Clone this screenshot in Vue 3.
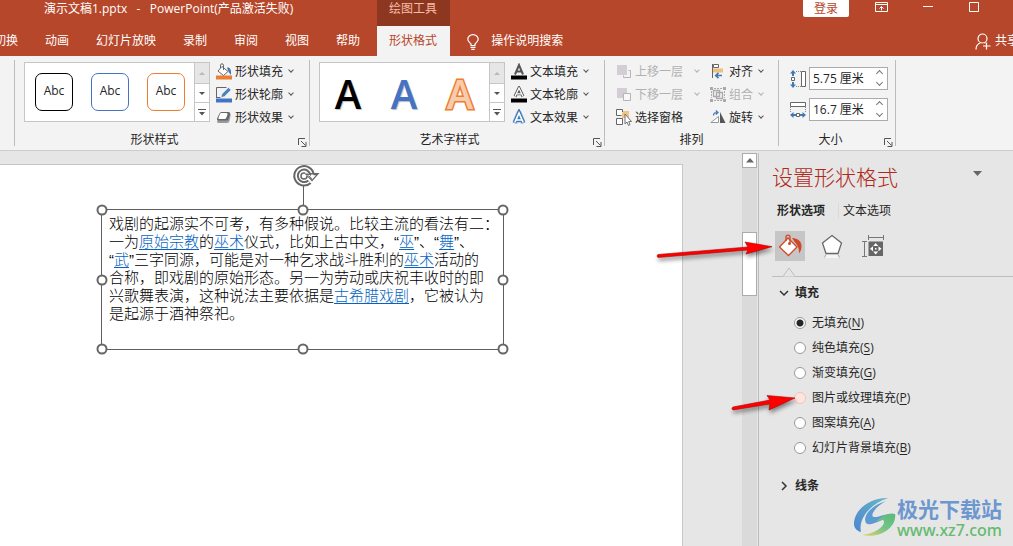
<script setup>
import { ref } from 'vue'

const tabs = ['切换', '动画', '幻灯片放映', '录制', '审阅', '视图', '帮助']
const shapeStyles = ['black', 'blue', 'orange']
const height = ref('5.75 厘米')
const width = ref('16.7 厘米')
const fill = ref('N')
const fills = [
  { key: 'N', label: '无填充' },
  { key: 'S', label: '纯色填充' },
  { key: 'G', label: '渐变填充' },
  { key: 'P', label: '图片或纹理填充', hover: true },
  { key: 'A', label: '图案填充' },
  { key: 'B', label: '幻灯片背景填充' }
]
const handles = ['nw', 'n', 'ne', 'w', 'e', 'sw', 's', 'se']
</script>

<template>
  <div class="app">
    <header class="top">
      <div class="titlebar">
        <div class="doc-title">演示文稿1.pptx&nbsp;&nbsp; -&nbsp;&nbsp; PowerPoint(产品激活失败)</div>
        <div class="context">绘图工具</div>
        <div class="win">
          <button class="login">登录</button>
          <button class="wbtn" aria-label="功能区显示选项">
            <svg width="13" height="11" viewBox="0 0 13 11" fill="none" stroke="#fff"><path d="M.5 .5h12v9h-12zM.5 2.500h12M6.500 8.500V4.500M4.500 6.500l2-2 2 2" /></svg>
          </button>
          <button class="wbtn" aria-label="最小化">
            <svg width="10" height="11" viewBox="0 0 10 11" stroke="#fff"><path d="M0 4.500h10" /></svg>
          </button>
          <button class="wbtn" aria-label="最大化">
            <svg width="10" height="11" viewBox="0 0 10 11" fill="none" stroke="#fff"><path d="M.5 .5h9v9h-9z" /></svg>
          </button>
        </div>
      </div>
      <nav class="tabs">
        <button v-for="t in tabs" :key="t" class="tab">{{ t }}</button>
        <button class="tab active">形状格式</button>
        <button class="tell">
          <svg width="12" height="16" viewBox="0 0 12 16" fill="none" stroke="#fff" stroke-width="1.200"><path d="M4 11.500V10C2.500 8.500 .8 7.500 .8 5.300a5.200 4.700 0 0 1 10.400 0C11.200 7.500 9.500 8.500 8 10v1.500zM3.500 13.400h5M4.300 15.300h3.400" /></svg>
          <span>操作说明搜索</span>
        </button>
        <button class="share">
          <svg width="16" height="17" viewBox="0 0 16 17" fill="none" stroke="#fff" stroke-width="1.200"><circle cx="7.500" cy="5.500" r="4.500" /><path d="M1 16.500c0-3 1.500-5.500 4.500-6.700M9.500 9.800l1 .5M11.500 9.500v7M8 13h7.500" /></svg>
          <span>共享</span>
        </button>
      </nav>
    </header>

    <section class="ribbon">
      <div class="group styles">
        <div class="body">
          <div class="gallery">
            <div class="items">
              <button v-for="s in shapeStyles" :key="s" class="shape" :class="s">Abc</button>
            </div>
            <div class="scroller">
              <button aria-label="上一行" class="off"><svg width="6" height="3" viewBox="0 0 6 3"><path d="M0 3l3-3 3 3z" fill="#b8b8b8" /></svg></button>
              <button aria-label="下一行"><svg width="6" height="3" viewBox="0 0 6 3"><path d="M0 0h6L3 3z" fill="#555" /></svg></button>
              <button aria-label="其他"><svg width="8" height="7" viewBox="0 0 8 7"><path d="M0 0h8v1H0zM1 3h6L4 6.500z" fill="#555" /></svg></button>
            </div>
          </div>
          <div class="cmds">
            <button class="cmd">
              <svg width="16" height="17" viewBox="0 0 16 17"><path d="M0 12.500h16v4H0z" fill="#ed7d31" /><path d="M6 3.500l6 5-4.500 4-5.500-4.500z" fill="#fff" stroke="#666" /><path d="M4.500 5V2.200C4.500 .3 7.500 .3 7.500 2.200V7" fill="none" stroke="#666" /><path d="M11 4.500c3-.5 4.500 2 4 7.500-1-1.500-2-2-2.500-3.500z" fill="#3f74b5" /></svg>
              <span>形状填充</span><i class="caret"></i>
            </button>
            <button class="cmd">
              <svg width="16" height="17" viewBox="0 0 16 17"><path d="M0 12.500h16v4H0z" fill="#4472c4" /><path d="M10.500 1.500h-10v10.500M.5 11.500h4" fill="none" stroke="#666" /><path d="M5 11.500l1-3.500L12.500 1.500 15 4 8.500 10.500z" fill="#4b83bd" stroke="#f3f3f3" stroke-width=".5" /></svg>
              <span>形状轮廓</span><i class="caret"></i>
            </button>
            <button class="cmd">
              <svg width="16" height="17" viewBox="0 0 16 17"><path d="M5 4h8q2 0 1.700 2l-1.200 6q-.5 2-2.500 2H3q-2 0-2-1.500z" fill="#999" /><path d="M5.500 3h7q2 0 1.500 2L12.500 10q-.5 1.500-2 1.500H2.500q-2 0-1.500-2L3.500 4.500q.5-1.500 2-1.500z" fill="#666" /><path d="M5.500 4h5q1.500 0 1 1.500L10.200 9q-.4 1-1.500 1H3Q2 10 2.400 9L4 5q.5-1 1.500-1z" fill="#fff" /></svg>
              <span>形状效果</span><i class="caret"></i>
            </button>
          </div>
        </div>
        <div class="foot"><span>形状样式</span><button class="launch" aria-label="形状样式设置"><svg width="9" height="9" viewBox="0 0 9 9" fill="none" stroke="#555"><path d="M.5 7V.5H7M3 3l4.500 4.500M8 4v4.500H3.500" /></svg></button></div>
      </div>

      <div class="group styles">
        <div class="body">
          <div class="gallery">
            <div class="items letters">
              <button class="letter black">A</button>
              <button class="letter blue">A</button>
              <button class="letter orange">A</button>
            </div>
            <div class="scroller">
              <button aria-label="上一行" class="off"><svg width="6" height="3" viewBox="0 0 6 3"><path d="M0 3l3-3 3 3z" fill="#b8b8b8" /></svg></button>
              <button aria-label="下一行"><svg width="6" height="3" viewBox="0 0 6 3"><path d="M0 0h6L3 3z" fill="#555" /></svg></button>
              <button aria-label="其他"><svg width="8" height="7" viewBox="0 0 8 7"><path d="M0 0h8v1H0zM1 3h6L4 6.500z" fill="#555" /></svg></button>
            </div>
          </div>
          <div class="cmds">
            <button class="cmd">
              <svg width="16" height="17" viewBox="0 0 16 17"><path d="M0 12.500h16v4H0z" fill="#000" /><path d="M4 11.500L8 2l4 9.500M5.500 8.500h5" fill="none" stroke="#555" stroke-width="2" /></svg>
              <span>文本填充</span><i class="caret"></i>
            </button>
            <button class="cmd">
              <svg width="16" height="17" viewBox="0 0 16 17"><path d="M0 12.500h16v4H0z" fill="#000" /><path d="M4 10.500L8 2l4 8.500M5.500 7.800h5" fill="none" stroke="#555" stroke-width="3" /><path d="M4 10.500L8 2l4 8.500M5.500 7.800h5" fill="none" stroke="#fff" stroke-width="1.300" /></svg>
              <span>文本轮廓</span><i class="caret"></i>
            </button>
            <button class="cmd">
              <svg width="16" height="17" viewBox="0 0 16 17"><path d="M4 13.500L8 4l4 9.500M5.500 11h5" fill="none" stroke="#a9cbec" stroke-width="5.500" stroke-linejoin="round" /><path d="M3.500 14L8 3.500 12.500 14M5.500 11h5" fill="none" stroke="#3f78b5" stroke-width="3.800" /><path d="M3.800 13.500L8 4l4.200 9.500M5.500 11h5" fill="none" stroke="#fff" stroke-width="1.700" /></svg>
              <span>文本效果</span><i class="caret"></i>
            </button>
          </div>
        </div>
        <div class="foot"><span>艺术字样式</span><button class="launch" aria-label="艺术字样式设置"><svg width="9" height="9" viewBox="0 0 9 9" fill="none" stroke="#555"><path d="M.5 7V.5H7M3 3l4.500 4.500M8 4v4.500H3.500" /></svg></button></div>
      </div>

      <div class="group arrange">
        <div class="body">
          <div class="cmds wide">
            <button class="cmd" disabled>
              <svg width="16" height="17" viewBox="0 0 16 17"><path d="M1 2h10v10H1z" fill="#d3ced3" /><path d="M12.500 7.500h2v7h-7v-2" fill="none" stroke="#b5b5b5" /></svg>
              <span>上移一层</span><i class="caret"></i>
            </button>
            <button class="cmd" disabled>
              <svg width="16" height="17" viewBox="0 0 16 17"><path d="M1 2h10v10H1z" fill="#d3ced3" /><path d="M7.500 7.500h7v7h-7z" fill="#f8f8f8" stroke="#b5b5b5" /></svg>
              <span>下移一层</span><i class="caret"></i>
            </button>
            <button class="cmd">
              <svg width="16" height="17" viewBox="0 0 16 17"><path d="M6 2h7v7H6z" fill="#efc583" /><path d="M6.500 3V.5h-6v6h5M.5 9.500h6v6h-6z" fill="#fff" stroke="#666" /><path d="M9 5v10l2-2 1.500 3.500 1.500-.8L12.700 12.500h2.800z" fill="#fff" stroke="#666" stroke-width=".9" /></svg>
              <span>选择窗格</span>
            </button>
          </div>
          <div class="cmds">
            <button class="cmd">
              <svg width="16" height="17" viewBox="0 0 16 17"><path d="M3 5.500h10v4H3z" fill="#edc07d" /><path d="M3.500 1.500h5v3h-5z" fill="#fff" stroke="#666" /><path d="M2.500 1v14" stroke="#666" /><path d="M12 12.500H6M8.500 9.800L5.700 12.500l2.800 2.700" fill="none" stroke="#3f78b5" stroke-width="1.600" /></svg>
              <span>对齐</span><i class="caret"></i>
            </button>
            <button class="cmd" disabled>
              <svg width="16" height="17" viewBox="0 0 16 17"><path d="M0 1h3v3H0zM13 1h3v3h-3zM0 13h3v3H0zM13 13h3v3h-3z" fill="#aaa" /><path d="M4 2.500h8M4 14.500h8M1.500 5v7M14.500 5v7" stroke="#aaa" stroke-dasharray="2 1" /><path d="M6.500 6.500h6v6h-6z" fill="#f3f3f3" stroke="#aaa" stroke-width="1.300" /><path d="M3.500 4.500h6v6h-6z" fill="none" stroke="#aaa" stroke-width="1.300" /></svg>
              <span>组合</span><i class="caret"></i>
            </button>
            <button class="cmd">
              <svg width="16" height="17" viewBox="0 0 16 17"><path d="M.8 13.500L8.500 7.500v6z" fill="#fff" stroke="#999" /><path d="M10 3l5.500 11H10z" fill="#555" /><path d="M3.500 6.500c0-2.500 1.500-3 4-3M5.800 1.500L8 3.500 5.800 5.500" fill="none" stroke="#3f78b5" stroke-width="1.200" /></svg>
              <span>旋转</span><i class="caret"></i>
            </button>
          </div>
        </div>
        <div class="foot"><span>排列</span></div>
      </div>

      <div class="group size">
        <div class="fields">
          <label class="field">
            <svg width="16" height="18" viewBox="0 0 16 18"><path d="M11.500 1.500h4v15h-4z" fill="#fff" stroke="#666" /><path d="M6 1.500h5M6 16.500h5" stroke="#888" stroke-dasharray="1 1" /><path d="M1.500 7.500h3v3h-3z" fill="#fff" stroke="#666" /><path d="M3 0l3 3.500H4V6H2V3.500H0zM3 18l3-3.500H4V12H2v2.500H0z" fill="#3f78b5" /></svg>
            <span class="spin"><input v-model="height" aria-label="形状高度" /><span class="steps"><button aria-label="增加高度"><i class="up"></i></button><button aria-label="减小高度"><i class="down"></i></button></span></span>
          </label>
          <label class="field">
            <svg width="16" height="18" viewBox="0 0 16 18"><path d="M.5 1.500h15v4H.5z" fill="#fff" stroke="#666" /><path d="M.5 6v6M15.500 6v6" stroke="#888" stroke-dasharray="1 1" /><path d="M6.500 12.500h3v3h-3z" fill="#fff" stroke="#666" /><path d="M0 14l3.500-3v2H6v2H3.500v2zM16 14l-3.500-3v2H10v2h2.500v2z" fill="#3f78b5" /></svg>
            <span class="spin"><input v-model="width" aria-label="形状宽度" /><span class="steps"><button aria-label="增加宽度"><i class="up"></i></button><button aria-label="减小宽度"><i class="down"></i></button></span></span>
          </label>
        </div>
        <div class="foot"><span>大小</span><button class="launch" aria-label="大小设置"><svg width="9" height="9" viewBox="0 0 9 9" fill="none" stroke="#555"><path d="M.5 7V.5H7M3 3l4.500 4.500M8 4v4.500H3.500" /></svg></button></div>
      </div>
    </section>

    <main class="work">
      <div class="slide">
        <div class="textbox">
          <p>戏剧的起源实不可考，有多种假说。比较主流的看法有二：<br />一为<a href="#">原始宗教</a>的<a href="#">巫术</a>仪式，比如上古中文，“<a href="#">巫</a>”、“<a href="#">舞</a>”、<br />“<a href="#">武</a>”三字同源，可能是对一种乞求战斗胜利的<a href="#">巫术</a>活动的<br />合称，即戏剧的原始形态。另一为劳动或庆祝丰收时的即<br />兴歌舞表演，这种说法主要依据是<a href="#">古希腊戏剧</a>，它被认为<br />是起源于酒神祭祀。</p>
          <span class="stem"></span>
          <svg class="rotate" width="28" height="24" viewBox="0 0 28 24" fill="none"><path d="M17.500 17.700A8 8 0 1 1 20 11" stroke="#666" stroke-width="5.500" /><path d="M17.500 17.700A8 8 0 1 1 20 11" stroke="#fff" stroke-width="1.500" /><path d="M12.500 9.500h3.500l2 2V9h9.500L20 17.500z" fill="#666" /><path d="M15 11h3l1 1.500V10.500h2.500v.7H24L20 15.500z" fill="#fff" /><path d="M16.500 11.500L20 14.800" stroke="#666" /><circle cx="12" cy="12" r="3" stroke="#666" stroke-width="1.500" stroke-dasharray="15 4" /></svg>
          <span v-for="h in handles" :key="h" class="handle" :class="h"></span>
        </div>
      </div>
      <div class="vscroll">
        <button class="arrow" aria-label="向上滚动"><svg width="8" height="5" viewBox="0 0 8 5"><path d="M0 4.500L4 0l4 4.500z" fill="#666" /></svg></button>
        <div class="thumb"></div>
      </div>

      <aside class="pane">
        <div class="pane-head">
          <h2>设置形状格式</h2>
          <button aria-label="任务窗格选项"><svg width="9" height="5" viewBox="0 0 9 5"><path d="M0 0h9L4.500 5z" fill="#666" /></svg></button>
        </div>
        <div class="pane-tabs"><button class="on">形状选项</button><button>文本选项</button></div>
        <div class="icons">
          <button class="on" aria-label="填充与线条">
            <svg width="24" height="24" viewBox="0 0 24 24"><path d="M10 4l9 9-8.500 8.500L1.500 13z" fill="#fff" stroke="#d24726" stroke-width="1.300" /><path d="M8 7V3c0-2.500 4-2.500 4 0v6" fill="none" stroke="#d24726" stroke-width="1.300" /><circle cx="11.500" cy="9.500" r="1.500" fill="#d24726" /><path d="M14 4c7 .5 10 4 9.500 9.500-.2 3-1.500 4-2.500 6 .2-5-1-8-4-11z" fill="#d24726" /></svg>
          </button>
          <button aria-label="效果">
            <svg width="24" height="24" viewBox="0 0 24 24"><path d="M12 1.500l9.500 7.500-3.500 10.500H6L2.500 9z" fill="#fff" stroke="#6a6a6a" stroke-width="1.300" /><path d="M6 21h12l1 3H5z" fill="#f5f5f5" /><path d="M6 20.500l-1.500 3M18 20.500l1.500 3" stroke="#aaa" /></svg>
          </button>
          <button aria-label="大小与属性">
            <svg width="24" height="24" viewBox="0 0 24 24"><path d="M6.500 7.500H21V22H6.500z" fill="#666" /><path d="M7 3.500h14M6.500 1v5M21.500 1v5M2.500 8v14M0 7.500h5M0 22.500h5" stroke="#777" /><path d="M13.700 9l2.500 3h-5zM13.700 20.500l2.500-3h-5zM8 14.700l3-2.500v5zM19.500 14.700l-3-2.500v5z" fill="#fff" /><path d="M13 14h1.500v1.500H13z" fill="#fff" /></svg>
          </button>
        </div>
        <div class="rule"><svg width="16" height="10" viewBox="0 0 16 10"><path d="M0 9.500h2L8 1l6 8.500h2" fill="#e6e6e6" stroke="#bdbdbd" /></svg></div>
        <button class="sec"><svg width="10" height="10" viewBox="0 0 10 10" fill="none" stroke="#333" stroke-width="1.500"><path d="M1 3l4 4 4-4" /></svg>填充</button>
        <div class="radios">
          <label v-for="f in fills" :key="f.key"><input v-model="fill" type="radio" name="fill" :value="f.key" :class="{ hover: f.hover }" /><span>{{ f.label }}(<u>{{ f.key }}</u>)</span></label>
        </div>
        <button class="sec second"><svg width="10" height="10" viewBox="0 0 10 10" fill="none" stroke="#333" stroke-width="1.500"><path d="M3 1l4 4-4 4" /></svg>线条</button>

        <svg class="pointer first" width="120" height="24" viewBox="0 0 120 24"><path d="M4 14.500L94 7l-3-5 27 4.700L92 14l2-4L4 17.500q-2-1.500 0-3z" fill="#f00" stroke="#a00" stroke-width=".6" /></svg>
        <svg class="pointer lower" width="68" height="24" viewBox="0 0 68 24"><path d="M4 15L41 8l-3-4.500L66 6 40 18l1-6L4 18q-2-1.500 0-3z" fill="#f00" stroke="#a00" stroke-width=".6" /></svg>

        <div class="mark">
          <svg width="44" height="42" viewBox="0 0 44 42">
            <defs>
              <linearGradient id="ga" x1="0" y1="1" x2="1" y2="0"><stop offset="0" stop-color="#4a86d0" /><stop offset="1" stop-color="#69b8c8" /></linearGradient>
              <linearGradient id="gb" x1="0" y1="1" x2="1" y2="0"><stop offset="0" stop-color="#e6d36a" /><stop offset=".5" stop-color="#74c587" /><stop offset="1" stop-color="#58b97b" /></linearGradient>
            </defs>
            <path d="M35 1C17 0 1 13 1 27c0 4 3 7 7 8C5 22 17 7 35 1z" fill="url(#ga)" />
            <path d="M33 4C19 8 9 19 13 26c5 5 17-6 30-7-9-5-17 2-22 1-5-1 2-11 12-16z" fill="#5b9ad2" />
            <path d="M42 17c2 13-14 25-33 21 12-1 22-8 22-13 0-3-4-2-8 0 5-6 13-10 19-8z" fill="url(#gb)" />
          </svg>
          <div><strong>极光下载站</strong><span>www.xz7.com</span></div>
        </div>
      </aside>
    </main>
  </div>
</template>

<style>
body { background: #e6e6e6; }
</style>

<style scoped>
* { box-sizing: border-box; }
.app {
  min-height: 100vh;
  display: flex;
  flex-direction: column;
  overflow: hidden;
  font: 12px/16px "Open Sans", "Noto Sans CJK SC", sans-serif;
  color: #262626;
}
button { font: inherit; color: inherit; background: none; border: 0; padding: 0; margin: 0; }
svg { display: block; flex: none; }

.top { background: #b7472a; color: #fff; overflow: hidden; }
.titlebar { display: flex; height: 26px; align-items: flex-start; }
.doc-title { flex: 0 0 377px; padding: 1px 0 0 44px; white-space: nowrap; }
.context { height: 26px; padding: 1px 13px 0 12px; background: #8e3720; color: #f6bda7; }
.win { margin-left: auto; margin-right: 34px; display: flex; align-items: flex-start; }
.login { background: #fff; color: #b7472a; width: 46px; height: 17px; line-height: 15px; border-radius: 0 0 2px 2px; margin-right: 26px; }
.wbtn { padding-top: 2px; }
.wbtn + .wbtn { margin-left: 35px; }
.win .wbtn:last-child { margin-left: 36px; }
.tabs { display: flex; height: 30px; margin-left: -20px; margin-right: -6px; }
.tab { padding: 0 13px 1px 14px; white-space: nowrap; }
.tab.active { margin-left: 4px; padding: 0 13px 1px 12px; background: #f3f3f3; color: #b7472a; }
.tell, .share { display: flex; align-items: center; gap: 12px; padding-bottom: 1px; white-space: nowrap; }
.tell { margin-left: 17px; }
.share { margin-left: auto; gap: 4px; }
.tell svg, .share svg { margin-top: 2px; }

.ribbon { display: flex; height: 95px; padding: 4px 0 4px 14px; background: #f3f3f3; border-bottom: 1px solid #cdcdcd; }
.group { border-left: 1px solid #bdbdbd; display: flex; flex-direction: column; justify-content: space-between; }
.styles { width: 295px; padding-left: 9px; }
.arrange { width: 174px; }
.size { width: 118px; border-right: 1px solid #bdbdbd; }
.body { display: flex; }
.gallery { display: flex; width: 186px; height: 60px; margin-top: 2px; border: 1px solid #c6c6c6; background: #fff; }
.items { flex: 1; display: flex; align-items: center; gap: 18px; padding-left: 10px; }
.shape { width: 38px; height: 38px; border: 1px solid #000; border-radius: 7px; line-height: 14px; padding-bottom: 3px; background: #fff; }
.shape.blue { border-color: #4472c4; }
.shape.orange { border-color: #ed7d31; }
.letters { gap: 0; padding-left: 0; }
.letter { width: 56px; font-size: 40px; line-height: 58px; font-weight: 600; padding-top: 4px; text-shadow: 1px 1px 1px #bbb; }
.letter.black { color: #000; }
.letter.blue { color: #4472c4; }
.letter.orange { color: #f8cbad; -webkit-text-stroke: 3px #ed7d31; paint-order: stroke fill; text-shadow: none; }
.scroller { width: 15px; display: grid; grid-template-rows: 20px 19px 19px; border-left: 1px solid #c6c6c6; }
.scroller button { display: grid; place-items: center; }
.scroller button + button { border-top: 1px solid #c6c6c6; }
.scroller .off { background: #e6e6e6; }
.cmds { display: flex; flex-direction: column; padding-left: 6px; }
.cmd { display: flex; align-items: center; height: 23px; white-space: nowrap; }
.cmd span { margin-left: 3px; }
.caret { width: 4px; height: 4px; border: solid #555; border-width: 0 1px 1px 0; transform: rotate(45deg); margin: -3px 0 0 6px; }
.cmd:disabled { color: #b1b1b1; }
.cmd:disabled .caret { border-color: #b1b1b1; }
.wide { width: 99px; padding-left: 11px; }
.wide .caret { margin-left: 12px; }
.foot { display: flex; align-items: center; height: 16px; margin-bottom: -2px; }
.foot span { flex: 1; text-align: center; }
.launch { width: 13px; height: 9px; margin-top: 4px; padding-left: 2px; }
.styles .foot { margin-left: -11px; }
.fields { display: flex; flex-direction: column; gap: 8px; padding: 7px 0 0 11px; }
.field { display: flex; align-items: center; gap: 3px; }
.spin { display: flex; width: 79px; height: 23px; border: 1px solid #ababab; background: #fff; }
.spin input { flex: 1; min-width: 0; border: 0; padding: 0 0 0 3px; font: inherit; color: inherit; background: none; outline: 0; }
.steps { width: 16px; display: grid; grid-template-rows: 1fr 1fr; }
.steps button { display: grid; place-items: center; }
.steps i { width: 5px; height: 5px; border: solid #777; transform: rotate(45deg); }
.steps .up { border-width: 1px 0 0 1px; }
.steps .down { border-width: 0 1px 1px 0; margin-top: -3px; }

.work { flex: 1; display: flex; background: #e6e6e6; }
.slide { flex: 1; margin: 13px 59px 0 0; border: solid #c6c6c6; border-width: 1px 1px 0 0; background: #fff; }
.textbox { position: relative; width: 403px; margin: 44px 0 0 101px; padding: 5px 0 26px 7px; border: 1px solid #5f5f5f; }
.textbox p { margin: 0; font: 300 15px/18px "Liberation Sans", "Noto Sans CJK SC", sans-serif; color: #000; white-space: nowrap; }
.textbox a { color: #0563c1; text-decoration: underline; text-underline-offset: 2px; }
.handle { position: absolute; width: 11px; height: 11px; border: 2px solid #666; border-radius: 50%; background: #fff; transform: translate(-50%, -50%); }
.nw, .n, .ne { top: 0; }
.w, .e { top: 50%; }
.sw, .s, .se { top: 100%; }
.nw, .w, .sw { left: 0; }
.n, .s { left: 50%; }
.ne, .e, .se { left: 100%; }
.stem { position: absolute; left: 50%; top: -25px; height: 25px; border-left: 1px solid #5f5f5f; }
.rotate { position: absolute; left: 190px; top: -46px; }
.vscroll { width: 15px; margin-top: 2px; background: #dadada; display: flex; flex-direction: column; }
.arrow { width: 15px; height: 15px; border: 1px solid #ababab; background: #fff; display: grid; place-items: center; }
.thumb { margin-top: 64px; height: 64px; border: 1px solid #ababab; background: #fff; }

.pane { position: relative; width: 255px; margin: 2px 0 0 1px; border-left: 1px solid #bdbdbd; padding-left: 13px; }
.pane-head { display: flex; align-items: center; justify-content: space-between; padding: 8px 31px 0 0; }
.pane-head h2 { margin: 0; font: 300 21px/30px "Noto Sans CJK SC", sans-serif; color: #b02a18; }
.pane-head button { margin-top: -6px; }
.pane-tabs { display: flex; padding: 12px 0 0 5px; }
.pane-tabs button { line-height: 16px; }
.pane-tabs .on { font-weight: 700; padding-right: 13px; border-right: 1px solid #dadada; margin-right: 4px; }
.icons { display: flex; gap: 12px; padding: 12px 0 0 3px; }
.icons button { width: 30px; height: 30px; display: grid; place-items: center; }
.icons .on { background: #c6c6c6; }
.rule { height: 16px; padding: 6px 0 0 9px; border-bottom: 1px solid #bdbdbd; }
.sec { display: flex; align-items: center; gap: 6px; margin: 8px 0 0 7px; font-weight: 700; height: 16px; }
.radios { padding: 9px 0 0 22px; }
.radios label { display: flex; align-items: center; gap: 6px; height: 25px; }
.radios input { appearance: none; width: 12px; height: 12px; margin: 0; border: 1px solid #999; border-radius: 50%; background: #fff; }
.radios input:checked { background: radial-gradient(circle, #262626 0 3px, #fff 4px); }
.radios .hover { border-color: #f6c4b4; background: #fce6df; }
.radios u { text-underline-offset: 2px; }
.sec.second { margin-top: 18px; }
.pointer { position: absolute; filter: drop-shadow(1px 3px 2px rgba(0, 0, 0, .45)); }
.first { left: -105px; top: 87px; }
.lower { left: -30px; top: 239px; }
.mark { position: absolute; right: 11px; bottom: 6px; display: flex; align-items: center; }
.mark strong { display: block; font: 700 21px/24px "Noto Sans CJK SC", sans-serif; color: #6d97cf; }
.mark span { display: block; font: 500 16px/20px "Noto Sans", sans-serif; color: #63bb70; }
</style>
